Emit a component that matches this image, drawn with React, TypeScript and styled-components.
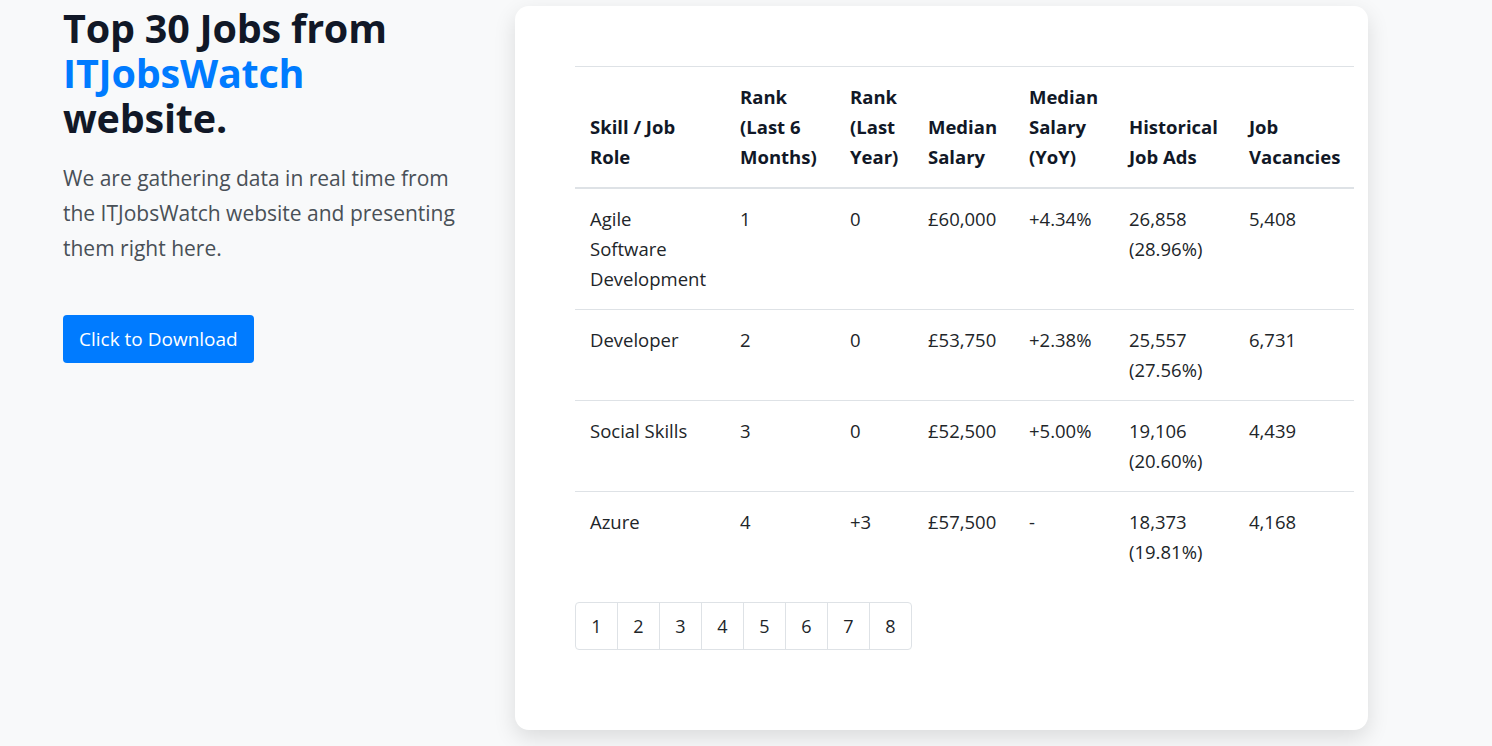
import styled, { createGlobalStyle } from 'styled-components';

const GlobalStyle = createGlobalStyle`
    html, body {
        margin: 0;
        padding: 0;
        background: #f8f9fa;
        font-family: "Open Sans", "Noto Sans", sans-serif;
        color: #212529;
    }
`;

const StyledPage = styled.main`
    display: flex;
    align-items: flex-start;
    gap: 32px;
    padding: 6px 0 16px 63px;
`;

const StyledIntro = styled.section`
    width: 420px;
    flex-shrink: 0;
`;

const StyledTitle = styled.h1`
    margin: 0;
    max-width: 380px;
    font-size: 39.5px;
    line-height: 45px;
    font-weight: 700;
    color: #111827;
    letter-spacing: -0.2px;

    span {
        color: #007bff;
    }
`;

const StyledLead = styled.p`
    margin: 20px 0 49px;
    font-size: 21px;
    line-height: 35px;
    color: #495057;
    width: 405px;
`;

const StyledButton = styled.a`
    display: inline-block;
    background: #007bff;
    color: #fff;
    font-size: 19px;
    line-height: 30px;
    padding: 9px 16px;
    border-radius: 4px;
    text-decoration: none;
`;

const StyledCard = styled.section`
    width: 853px;
    box-sizing: border-box;
    background: #fff;
    border-radius: 14px;
    box-shadow: 0 8px 22px rgba(0, 0, 0, 0.12);
    padding: 60px 14px 80px 60px;
`;

const StyledTable = styled.table`
    width: 779px;
    border-collapse: collapse;
    table-layout: fixed;
    font-size: 18.5px;
    line-height: 30px;

    th, td {
        padding: 15px;
        text-align: left;
        vertical-align: top;
    }

    th {
        vertical-align: bottom;
        font-weight: 700;
        color: #111827;
        border-top: 1px solid #dee2e6;
        border-bottom: 2px solid #dee2e6;
    }

    tbody tr + tr td {
        border-top: 1px solid #dee2e6;
    }
`;

const StyledPagination = styled.nav`
    display: inline-flex;
    margin-top: 20px;
    border: 1px solid #dee2e6;
    border-radius: 4px;
    overflow: hidden;
`;

const StyledPageLink = styled.a<{ $first?: boolean }>`
    width: 41px;
    height: 46px;
    display: flex;
    align-items: center;
    justify-content: center;
    font-size: 18px;
    color: #212529;
    border-left: ${p => (p.$first ? 'none' : '1px solid #dee2e6')};
`;

const columns = [150, 110, 78, 101, 100, 120, 120];

const headers = [
    'Skill / Job Role',
    'Rank (Last 6 Months)',
    'Rank (Last Year)',
    'Median Salary',
    'Median Salary (YoY)',
    'Historical Job Ads',
    'Job Vacancies'
];

const rows = [
    ['Agile Software Development', '1', '0', '£60,000', '+4.34%', '26,858 (28.96%)', '5,408'],
    ['Developer', '2', '0', '£53,750', '+2.38%', '25,557 (27.56%)', '6,731'],
    ['Social Skills', '3', '0', '£52,500', '+5.00%', '19,106 (20.60%)', '4,439'],
    ['Azure', '4', '+3', '£57,500', '-', '18,373 (19.81%)', '4,168']
];

export default function App() {
    return (
        <StyledPage>
            <GlobalStyle />
            <StyledIntro>
                <StyledTitle>
                    Top 30 Jobs from <span>ITJobsWatch</span> website.
                </StyledTitle>
                <StyledLead>
                    We are gathering data in real time from the ITJobsWatch website and presenting them right here.
                </StyledLead>
                <StyledButton href="#">Click to Download</StyledButton>
            </StyledIntro>
            <StyledCard>
                <StyledTable>
                    <colgroup>
                        {columns.map((w, i) => (
                            <col key={i} style={{ width: w }} />
                        ))}
                    </colgroup>
                    <thead>
                        <tr>
                            {headers.map(h => (
                                <th key={h}>{h}</th>
                            ))}
                        </tr>
                    </thead>
                    <tbody>
                        {rows.map(row => (
                            <tr key={row[0]}>
                                {row.map((cell, i) => (
                                    <td key={i}>{cell}</td>
                                ))}
                            </tr>
                        ))}
                    </tbody>
                </StyledTable>
                <StyledPagination>
                    {[1, 2, 3, 4, 5, 6, 7, 8].map(n => (
                        <StyledPageLink key={n} $first={n === 1}>
                            {n}
                        </StyledPageLink>
                    ))}
                </StyledPagination>
            </StyledCard>
        </StyledPage>
    );
}
